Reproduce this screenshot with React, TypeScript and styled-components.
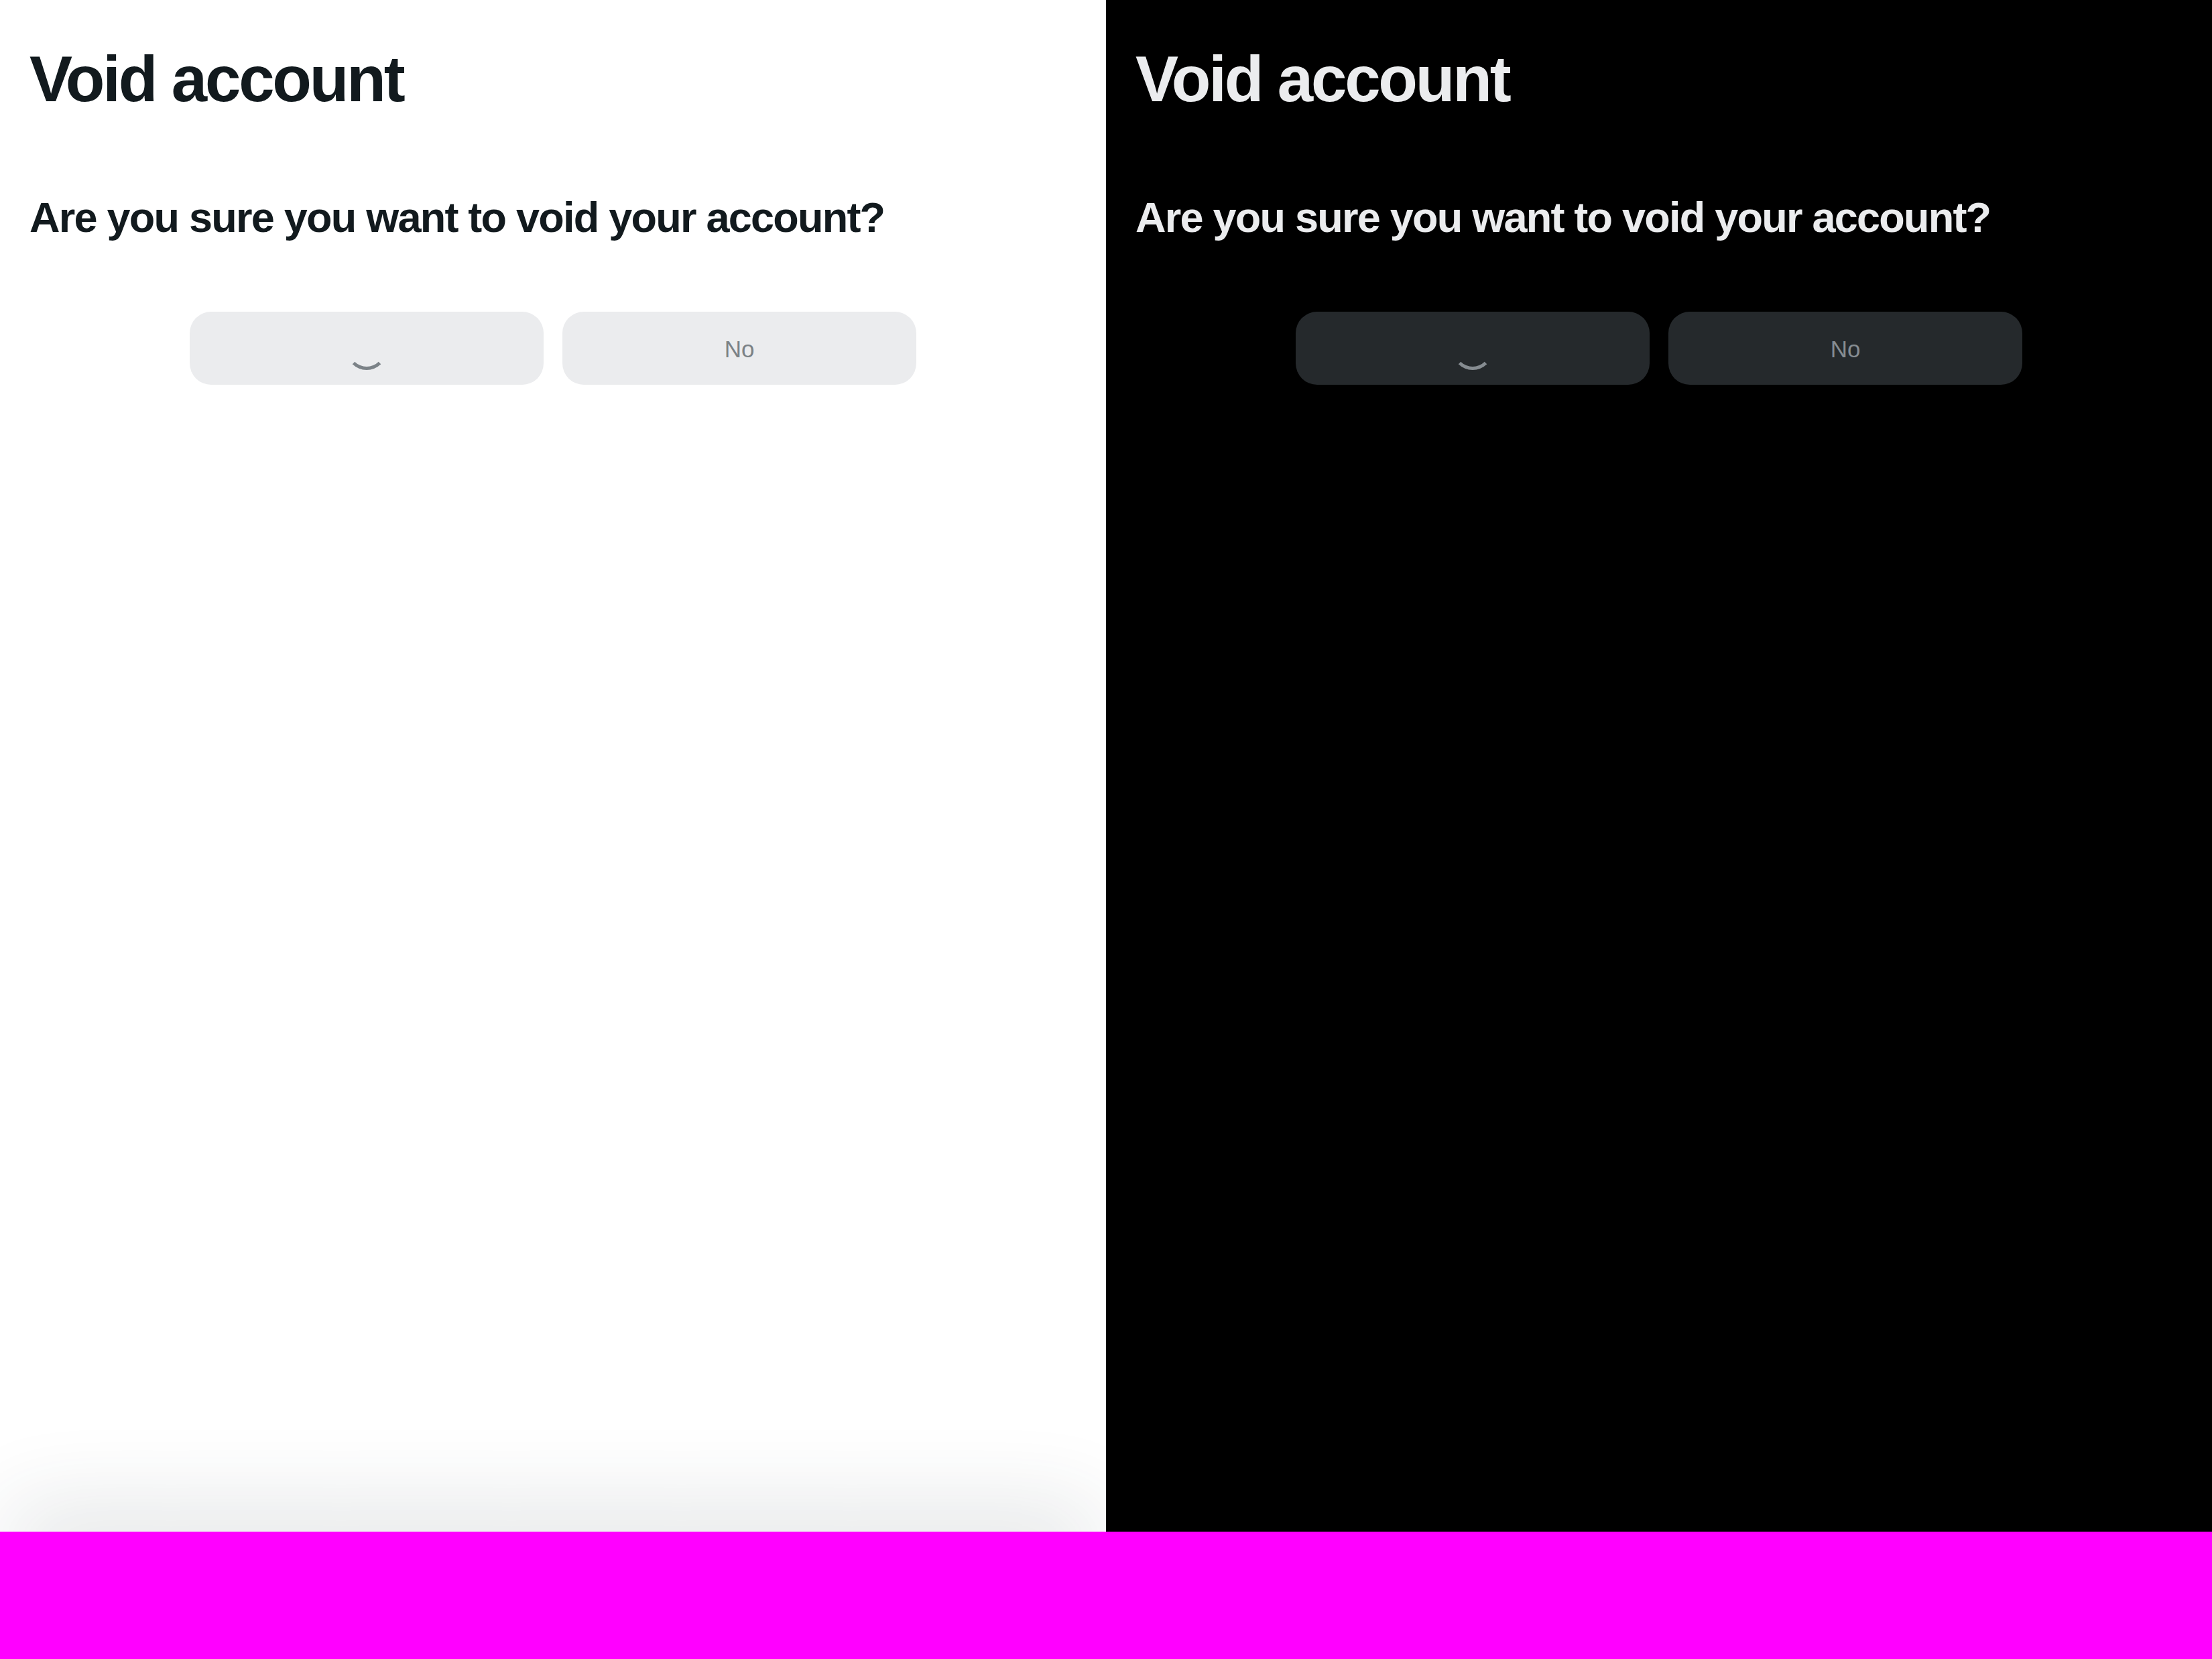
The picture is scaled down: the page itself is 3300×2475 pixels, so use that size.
import React from 'react';
import styled, { createGlobalStyle } from 'styled-components';

type Mode = 'light' | 'dark';

const palette = {
  light: {
    bg: '#ffffff',
    text: '#121a1e',
    buttonBg: '#ebecee',
    buttonText: '#7b8287',
  },
  dark: {
    bg: '#000000',
    text: '#ebecee',
    buttonBg: '#25292c',
    buttonText: '#868c91',
  },
};

const GlobalStyle = createGlobalStyle`
  html, body {
    margin: 0;
    padding: 0;
    background: #ff00ff;
  }
  body {
    font-family: "Liberation Sans", Arial, sans-serif;
  }
`;

const Page = styled.div`
  display: grid;
  grid-template-columns: 1650px 1650px;
  height: 2285px;
`;

const Panel = styled.section<{ $mode: Mode }>`
  position: relative;
  overflow: hidden;
  background: ${({ $mode }) => palette[$mode].bg};
  color: ${({ $mode }) => palette[$mode].text};
  padding: 60px 44px 0;
  box-sizing: border-box;

  &::after {
    content: '';
    display: ${({ $mode }) => ($mode === 'light' ? 'block' : 'none')};
    position: absolute;
    left: 40px;
    right: 40px;
    bottom: -40px;
    height: 40px;
    border-radius: 60px;
    box-shadow: 0 0 130px 34px rgba(40, 55, 65, 0.14);
  }
`;

const Title = styled.h1`
  margin: 0;
  font-size: 96px;
  line-height: 1.2;
  font-weight: 700;
  letter-spacing: -0.033em;
`;

const Question = styled.h2`
  margin: 112px 0 0;
  font-size: 63px;
  line-height: 1.2;
  font-weight: 700;
  letter-spacing: -0.028em;
`;

const Actions = styled.div`
  display: flex;
  justify-content: center;
  gap: 28px;
  margin-top: 102px;
`;

const ActionButton = styled.button<{ $mode: Mode }>`
  width: 528px;
  height: 109px;
  border: none;
  border-radius: 32px;
  background: ${({ $mode }) => palette[$mode].buttonBg};
  color: ${({ $mode }) => palette[$mode].buttonText};
  font-family: "Liberation Sans", Arial, sans-serif;
  font-size: 35px;
  display: flex;
  align-items: center;
  justify-content: center;
  padding: 3px 0 0;
  cursor: pointer;
`;

const Spinner = styled.span<{ $mode: Mode }>`
  display: block;
  width: 60px;
  height: 60px;
  box-sizing: border-box;
  margin-top: 2px;
  border-radius: 50%;
  border: 5px solid transparent;
  border-bottom-color: ${({ $mode }) => palette[$mode].buttonText};
`;

const VoidAccount = ({ mode }: { mode: Mode }) => (
  <Panel $mode={mode}>
    <Title>Void account</Title>
    <Question>Are you sure you want to void your account?</Question>
    <Actions>
      <ActionButton $mode={mode} aria-label="Yes" aria-busy="true">
        <Spinner $mode={mode} />
      </ActionButton>
      <ActionButton $mode={mode}>No</ActionButton>
    </Actions>
  </Panel>
);

const App = () => (
  <>
    <GlobalStyle />
    <Page>
      <VoidAccount mode="light" />
      <VoidAccount mode="dark" />
    </Page>
  </>
);

export default App;
